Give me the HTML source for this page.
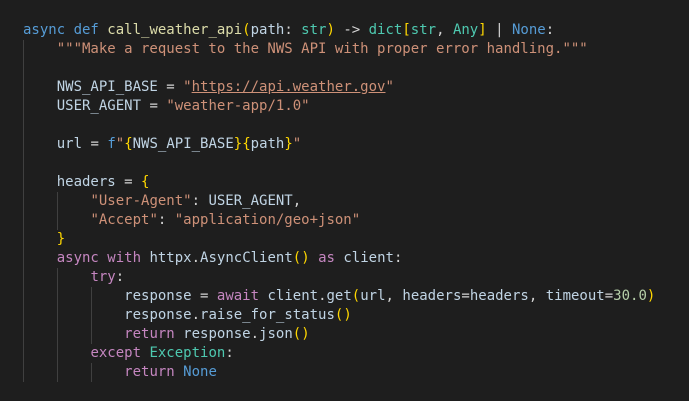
<!DOCTYPE html><html><head><meta charset="utf-8"><style>
body{margin:0;background:#1e1e1e;width:689px;height:401px;overflow:hidden;position:relative}
pre{margin:0;position:absolute;left:23px;top:21px;font-family:"DejaVu Sans Mono","Liberation Mono",monospace;font-size:14px;line-height:19px;color:#d4d4d4}
.k{color:#569cd6}.f{color:#dcdcaa}.v{color:#c0d4e4}.t{color:#4ec9b0}.s{color:#ce9178}.c{color:#c586c0}.y{color:#ffd700}.p{color:#da70d6}.n{color:#b5cea8}.u{text-decoration:underline}
.g{position:absolute;width:1px;background:#404040}
</style></head><body>
<div class="g" style="left:23px;top:40px;height:342px"></div>
<div class="g" style="left:57px;top:192px;height:38px"></div>
<div class="g" style="left:57px;top:268px;height:114px"></div>
<div class="g" style="left:91px;top:287px;height:57px"></div>
<div class="g" style="left:91px;top:363px;height:19px"></div>
<pre><span class="k">async def</span> <span class="f">call_weather_api</span><span class="y">(</span><span class="v">path</span>: <span class="t">str</span><span class="y">)</span> -&gt; <span class="t">dict</span><span class="y">[</span><span class="t">str</span>, <span class="t">Any</span><span class="y">]</span> | <span class="k">None</span>:
    <span class="s">"""Make a request to the NWS API with proper error handling."""</span>

    <span class="v">NWS_API_BASE</span> = <span class="s">"<span class="u">https://api.weather.gov</span>"</span>
    <span class="v">USER_AGENT</span> = <span class="s">"weather-app/1.0"</span>

    <span class="v">url</span> = <span class="k">f</span><span class="s">"</span><span class="y">{</span><span class="v">NWS_API_BASE</span><span class="y">}{</span><span class="v">path</span><span class="y">}</span><span class="s">"</span>

    <span class="v">headers</span> = <span class="y">{</span>
        <span class="s">"User-Agent"</span>: <span class="v">USER_AGENT</span>,
        <span class="s">"Accept"</span>: <span class="s">"application/geo+json"</span>
    <span class="y">}</span>
    <span class="c">async with</span> <span class="v">httpx</span>.<span class="v">AsyncClient</span><span class="y">()</span> <span class="c">as</span> <span class="v">client</span>:
        <span class="c">try</span>:
            <span class="v">response</span> = <span class="c">await</span> <span class="v">client</span>.<span class="v">get</span><span class="y">(</span><span class="v">url</span>, <span class="v">headers</span>=<span class="v">headers</span>, <span class="v">timeout</span>=<span class="n">30.0</span><span class="y">)</span>
            <span class="v">response</span>.<span class="v">raise_for_status</span><span class="y">()</span>
            <span class="c">return</span> <span class="v">response</span>.<span class="v">json</span><span class="y">()</span>
        <span class="c">except</span> <span class="t">Exception</span>:
            <span class="c">return</span> <span class="k">None</span>
</pre></body></html>
